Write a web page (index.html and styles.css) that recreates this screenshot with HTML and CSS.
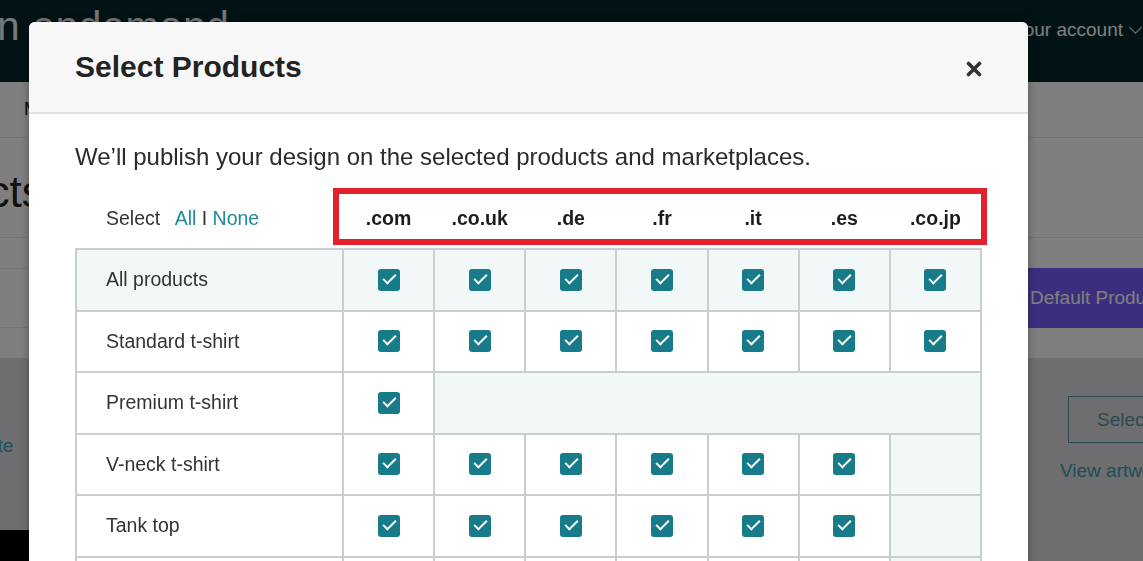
FILE: index.html
```html
<!DOCTYPE html>
<html lang="en">
<head>
  <meta charset="UTF-8" />
  <meta name="viewport" content="width=device-width, initial-scale=1.0"/>
  <title>Select Products</title>
  <link rel="stylesheet" href="styles.css">
</head>
<body>

  <!-- page behind the dialog -->
  <div class="page">
    <header class="topbar">
      <span class="brand">on ondemand</span>
      <span class="account">Your account <span class="caret"></span></span>
    </header>

    <nav class="tabs">
      <a href="#">Manage</a>
    </nav>

    <div class="title-band">
      <h2>Products</h2>
    </div>

    <div class="toolbar">
      <div class="filter-box"></div>
      <button class="btn-primary">Default Products</button>
    </div>

    <div class="content">
      <div class="content-left">
        <div class="card"><a class="link" href="#">Update</a></div>
        <div class="foot"></div>
      </div>
      <div class="content-right">
        <button class="btn-outline">Select Products</button>
        <a class="link" href="#">View artwork</a>
      </div>
    </div>
  </div>

  <div class="overlay"></div>

  <div class="modal">
    <div class="modal-head">
      <h1>Select Products</h1>
      <button class="close" aria-label="Close">
        <svg width="16" height="16" viewBox="0 0 16 16">
          <path d="M2.5 2.5 L13.5 13.5 M13.5 2.5 L2.5 13.5" stroke="#333" stroke-width="3.6" stroke-linecap="round"/>
        </svg>
      </button>
    </div>

    <div class="modal-body">
      <p class="intro">We’ll publish your design on the selected products and marketplaces.</p>

      <div class="grid-wrap">
        <table class="grid">
          <colgroup>
            <col class="col-name">
            <col><col><col><col><col><col><col>
          </colgroup>
          <thead>
            <tr>
              <th class="select-all">Select <a href="#">All</a> I <a href="#">None</a></th>
              <th>.com</th>
              <th>.co.uk</th>
              <th>.de</th>
              <th>.fr</th>
              <th>.it</th>
              <th>.es</th>
              <th>.co.jp</th>
            </tr>
          </thead>
          <tbody>
            <tr class="all-row">
              <td>All products</td>
              <td><span class="check"></span></td>
              <td><span class="check"></span></td>
              <td><span class="check"></span></td>
              <td><span class="check"></span></td>
              <td><span class="check"></span></td>
              <td><span class="check"></span></td>
              <td><span class="check"></span></td>
            </tr>
            <tr>
              <td>Standard t-shirt</td>
              <td><span class="check"></span></td>
              <td><span class="check"></span></td>
              <td><span class="check"></span></td>
              <td><span class="check"></span></td>
              <td><span class="check"></span></td>
              <td><span class="check"></span></td>
              <td><span class="check"></span></td>
            </tr>
            <tr>
              <td>Premium t-shirt</td>
              <td><span class="check"></span></td>
              <td class="na" colspan="6"></td>
            </tr>
            <tr>
              <td>V-neck t-shirt</td>
              <td><span class="check"></span></td>
              <td><span class="check"></span></td>
              <td><span class="check"></span></td>
              <td><span class="check"></span></td>
              <td><span class="check"></span></td>
              <td><span class="check"></span></td>
              <td class="na"></td>
            </tr>
            <tr>
              <td>Tank top</td>
              <td><span class="check"></span></td>
              <td><span class="check"></span></td>
              <td><span class="check"></span></td>
              <td><span class="check"></span></td>
              <td><span class="check"></span></td>
              <td><span class="check"></span></td>
              <td class="na"></td>
            </tr>
            <tr>
              <td>Long sleeve t-shirt</td>
              <td><span class="check"></span></td>
              <td><span class="check"></span></td>
              <td><span class="check"></span></td>
              <td><span class="check"></span></td>
              <td><span class="check"></span></td>
              <td><span class="check"></span></td>
              <td class="na"></td>
            </tr>
          </tbody>
        </table>

        <!-- red frame around the marketplace headings -->
        <div class="highlight"></div>
      </div>
    </div>
  </div>

</body>
</html>
```

FILE: styles.css
```css
body {
  margin: 0;
  overflow: hidden;
  font-family: "Liberation Sans", Arial, sans-serif;
  color: #333;
}

a {
  text-decoration: none;
}

/* ---------- page behind the dialog ---------- */

.page {
  width: 1143px;
  background-color: #fff;
}

.topbar {
  height: 82px;
  background-color: #04262c;
  display: flex;
  justify-content: space-between;
  align-items: flex-start;
  overflow: hidden;
}

.brand {
  margin-left: -26px;
  margin-top: 4px;
  font-size: 40px;
  font-weight: 300;
  color: #f0f0f0;
  letter-spacing: 1px;
  white-space: nowrap;
}

.account {
  margin-top: 19px;
  margin-right: 3px;
  font-size: 19px;
  color: #fff;
  display: flex;
  align-items: center;
  gap: 8px;
}

.caret {
  width: 8px;
  height: 8px;
  border-right: 1.5px solid #fff;
  border-bottom: 1.5px solid #fff;
  transform: rotate(45deg);
  margin-top: -6px;
}

.tabs {
  height: 55px;
  border-bottom: 1px solid #e8e8e8;
  display: flex;
  align-items: center;
  padding-left: 24px;
}

.tabs a {
  font-size: 18px;
  color: #111;
}

.title-band {
  height: 99px;
  border-bottom: 1px solid #e8e8e8;
  display: flex;
  align-items: center;
}

.title-band h2 {
  margin: 8px 0 0 -130px;
  font-size: 44px;
  font-weight: 400;
  color: #222;
}

.toolbar {
  height: 120px;
  padding: 30px 0;
  box-sizing: border-box;
  display: flex;
  justify-content: space-between;
}

.filter-box {
  width: 300px;
  margin-left: -40px;
  border-top: 1px solid #e8e8e8;
  border-bottom: 1px solid #e8e8e8;
}

.btn-primary {
  width: 230px;
  margin-right: -97px;
  padding: 0 0 0 20px;
  text-align: left;
  border: none;
  background-color: #765dff;
  color: #fff;
  font-family: inherit;
  font-size: 19px;
}

.content {
  height: 220px;
  background-color: #dcdce0;
  display: flex;
  justify-content: space-between;
}

.content-left {
  width: 600px;
  display: flex;
  flex-direction: column;
}

.card {
  height: 172px;
  padding-top: 77px;
  box-sizing: border-box;
}

.card .link {
  margin-left: -48px;
}

.foot {
  flex: 1;
  background-color: #000;
}

.content-right {
  width: 83px;
  padding-top: 38px;
  display: flex;
  flex-direction: column;
  align-items: flex-start;
  white-space: nowrap;
}

.btn-outline {
  height: 47px;
  margin-left: 8px;
  padding: 0 28px;
  border: 1.5px solid #58949f;
  background: transparent;
  color: #58949f;
  font-family: inherit;
  font-size: 19px;
}

.link {
  font-size: 19px;
  color: #3a9cae;
}

.content-right .link {
  margin-top: 17px;
}

.overlay {
  position: fixed;
  inset: 0;
  background-color: rgba(0, 0, 0, 0.5);
}

/* ---------- dialog ---------- */

.modal {
  position: fixed;
  left: 29px;
  top: 22px;
  width: 999px;
  height: 720px;
  background-color: #fff;
  border-radius: 6px 6px 0 0;
  box-shadow: 0 0 8px rgba(0, 0, 0, 0.35);
  overflow: hidden;
}

.modal-head {
  height: 90px;
  padding: 0 46px;
  background-color: #f7f7f7;
  border-bottom: 2px solid #e0e0e0;
  display: flex;
  justify-content: space-between;
  align-items: center;
}

.modal-head h1 {
  margin: 0;
  font-size: 30px;
  font-weight: bold;
  color: #232323;
}

.close {
  padding: 0;
  border: none;
  background: none;
  display: flex;
  margin-top: 4px;
}

.modal-body {
  padding: 29px 46px 0;
}

.intro {
  margin: 0 0 17px;
  font-size: 24px;
  line-height: 28px;
  color: #2b2b2b;
}

.grid-wrap {
  position: relative;
}

.grid {
  width: 907px;
  table-layout: fixed;
  border-collapse: collapse;
  font-size: 19.5px;
}

.col-name {
  width: 267px;
}

.grid th {
  height: 60px;
  padding: 0;
  font-weight: bold;
  color: #1d1d1d;
  text-align: center;
}

.grid th.select-all {
  text-align: left;
  padding-left: 30px;
  font-weight: normal;
  color: #333;
}

.select-all a {
  color: #1f8a9b;
}

.select-all a:first-child {
  margin-left: 9px;
}

.grid td {
  height: 59.5px;
  padding: 0;
  border: 2px solid #cbcecf;
  text-align: center;
  vertical-align: middle;
}

.grid td:first-child {
  text-align: left;
  padding-left: 29px;
  color: #333;
}

.all-row td,
.grid td.na {
  background-color: #f2f7f8;
}

/* filled checkbox with a white tick */
.check {
  display: inline-block;
  position: relative;
  width: 22px;
  height: 22px;
  margin-top: -3px;
  border-radius: 3px;
  background-color: #177b89;
  vertical-align: middle;
}

.check::after {
  content: "";
  position: absolute;
  left: 5px;
  top: 5px;
  width: 11px;
  height: 5px;
  border-left: 2.5px solid #fff;
  border-bottom: 2.5px solid #fff;
  transform: rotate(-45deg);
}

.highlight {
  position: absolute;
  left: 258px;
  top: 0;
  width: 654px;
  height: 57px;
  box-sizing: border-box;
  border: 6px solid #e3212b;
  pointer-events: none;
}
```
